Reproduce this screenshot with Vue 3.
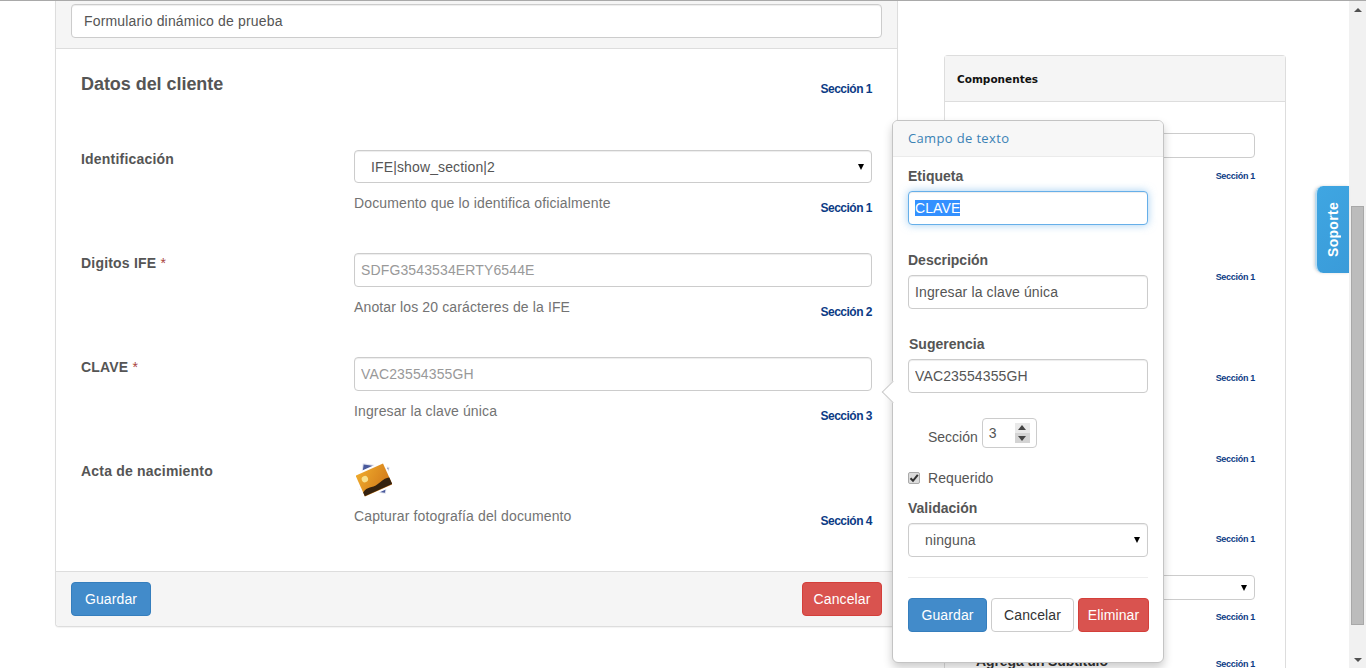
<template>
  <div class="screen">
    <div class="page">
      <div class="layout">
        <section class="panel form-panel">
          <div class="form-panel__heading">
            <input class="control" type="text" value="Formulario dinámico de prueba" readonly />
          </div>
          <div class="form-panel__body">
            <div class="title-row">
              <h3>Datos del cliente</h3>
              <span class="section-tag">Sección 1</span>
            </div>
            <div v-for="field in fields" :key="field.label" class="field" :class="'field--' + field.type">
              <label class="field__label">
                {{ field.label }}<span v-if="field.required" class="req"> *</span>
              </label>
              <div class="field__main">
                <select v-if="field.type === 'select'" class="control control--select">
                  <option>{{ field.value }}</option>
                </select>
                <input v-else-if="field.type === 'text'" class="control" type="text" :placeholder="field.value" readonly />
                <div v-else class="photo">
                  <svg width="36" height="36" viewBox="0 0 36 36" aria-hidden="true">
                    <defs>
                      <linearGradient id="sun" x1="0" y1="0" x2="1" y2="1">
                        <stop offset="0" stop-color="#eeaa2c" />
                        <stop offset="1" stop-color="#cf7418" />
                      </linearGradient>
                    </defs>
                    <rect x="5" y="4" width="27" height="27" fill="#dfe2ee" transform="rotate(8 18 16)" />
                    <rect x="6" y="5" width="25" height="25" fill="#4a5a9c" transform="rotate(8 18 16)" />
                    <g transform="rotate(-24 18 19)">
                      <rect x="1" y="5.5" width="34" height="27" fill="#fff" />
                      <rect x="3" y="7.5" width="30" height="23" fill="url(#sun)" />
                      <circle cx="10" cy="14.5" r="3.2" fill="#f8e08c" />
                      <path d="M3 26c6-4 10 0 16-1.500s10-3 14-1.500v7H3z" fill="#35220f" />
                    </g>
                  </svg>
                </div>
                <div class="field__foot">
                  <span class="help">{{ field.help }}</span>
                  <span class="section-tag">{{ field.section }}</span>
                </div>
              </div>
            </div>
          </div>
          <div class="form-panel__footer">
            <button class="btn btn--primary">Guardar</button>
            <button class="btn btn--danger">Cancelar</button>
          </div>
        </section>

        <aside class="panel parts-panel">
          <div class="parts-panel__heading">Componentes</div>
          <div class="parts-panel__body">
            <div v-for="(part, i) in parts" :key="i" class="part" :class="{ 'part--title': part.kind === 'title' }" :style="{ height: part.height + 'px' }">
              <input v-if="part.kind === 'input'" class="part__control" type="text" readonly />
              <select v-else-if="part.kind === 'select'" class="part__control part__control--select"></select>
              <strong v-else-if="part.kind === 'title'" class="part__title">Agrega un Subtitulo</strong>
              <span class="part__tag">Sección 1</span>
            </div>
          </div>
        </aside>
      </div>
    </div>

    <div class="scrollbar">
      <span class="scrollbar__arrow scrollbar__arrow--up"></span>
      <span class="scrollbar__thumb"></span>
      <span class="scrollbar__arrow scrollbar__arrow--down"></span>
    </div>

    <div class="support"><span>Soporte</span></div>

    <div class="popover">
      <span class="popover__arrow"></span>
      <div class="popover__title">Campo de texto</div>
      <div class="popover__body">
        <div class="group">
          <label>Etiqueta</label>
          <div class="control control--focus"><span class="selected">CLAVE</span></div>
        </div>
        <div class="group">
          <label>Descripción</label>
          <input class="control" type="text" value="Ingresar la clave única" readonly />
        </div>
        <div class="group">
          <label class="shift">Sugerencia</label>
          <input class="control" type="text" value="VAC23554355GH" readonly />
        </div>
        <div class="section-row">
          <span>Sección</span>
          <div class="spinner">
            <span class="spinner__value">3</span>
            <span class="spinner__btns">
              <i class="up"></i>
              <i class="down"></i>
            </span>
          </div>
        </div>
        <div class="check-row">
          <span class="check">
            <svg width="10" height="10" viewBox="0 0 10 10" aria-hidden="true">
              <path d="M1.5 5.200 4 7.800 8.800 1.800" fill="none" stroke="#333" stroke-width="2" />
            </svg>
          </span>
          <span>Requerido</span>
        </div>
        <div class="group group--last">
          <label>Validación</label>
          <select class="control control--select"><option>ninguna</option></select>
        </div>
        <hr />
        <div class="actions">
          <button class="btn btn--primary">Guardar</button>
          <button class="btn btn--default">Cancelar</button>
          <button class="btn btn--danger">Eliminar</button>
        </div>
      </div>
    </div>
  </div>
</template>

<script setup>
const fields = [
  { label: 'Identificación', type: 'select', value: 'IFE|show_section|2', help: 'Documento que lo identifica oficialmente', section: 'Sección 1' },
  { label: 'Digitos IFE', type: 'text', required: true, value: 'SDFG3543534ERTY6544E', help: 'Anotar los 20 carácteres de la IFE', section: 'Sección 2' },
  { label: 'CLAVE', type: 'text', required: true, value: 'VAC23554355GH', help: 'Ingresar la clave única', section: 'Sección 3' },
  { label: 'Acta de nacimiento', type: 'photo', help: 'Capturar fotografía del documento', section: 'Sección 4' }
]

const parts = [
  { kind: 'input', height: 80 },
  { height: 101 },
  { height: 101 },
  { height: 81 },
  { height: 80 },
  { kind: 'select', height: 78 },
  { kind: 'title', height: 47 }
]
</script>

<style>
html, body { margin: 0; overflow: hidden; background: #fff; }
</style>

<style scoped>
.screen { position: relative; display: flex; height: 667px; border-top: 1px solid #a9a9a9; overflow: hidden; font-family: "Liberation Sans", Arial, sans-serif; font-size: 14px; line-height: 20px; color: #555; }
.page { flex: 1; min-width: 0; }
.layout { display: flex; align-items: flex-start; padding-left: 55px; }

.panel { box-sizing: border-box; background: #fff; border: 1px solid #ddd; }

/* formulario */
.form-panel { width: 843px; border-top: 0; border-radius: 0 0 4px 4px; box-shadow: 0 1px 1px rgba(0,0,0,.05); }
.form-panel__heading { padding: 3px 15px 10px; background: #f5f5f5; border-bottom: 1px solid #ddd; }
.form-panel__body { padding: 0 25px; }
.form-panel__footer { display: flex; justify-content: space-between; padding: 10px 15px; background: #f5f5f5; border-top: 1px solid #ddd; border-radius: 0 0 4px 4px; }

.title-row { display: flex; justify-content: space-between; height: 100px; padding-top: 24px; box-sizing: border-box; }
.title-row h3 { margin: 0; font-size: 18px; line-height: 22px; font-weight: 700; color: #555; letter-spacing: -.05px; }
.title-row .section-tag { margin-top: 8px; }

.field { display: flex; height: 104px; }
.field--photo { height: 110px; }
.field__label { width: 273px; flex: none; font-weight: 700; letter-spacing: .2px; }
.req { color: #a94442; font-weight: 400; }
.field__main { flex: 1; min-width: 0; }
.field__foot { display: flex; justify-content: space-between; margin-top: 10px; }
.field--select .control--select { margin-top: 1px; height: 33px; }
.help { color: #737373; letter-spacing: .13px; }
.section-tag { align-self: flex-end; margin-bottom: -3px; font-size: 12px; line-height: 16px; font-weight: 700; color: #0c3b85; letter-spacing: -.5px; }
.title-row .section-tag { align-self: flex-start; margin-bottom: 0; }

.photo { height: 35px; padding-left: 2px; }
.photo svg { display: block; }

.control { display: block; box-sizing: border-box; width: 100%; height: 34px; padding: 6px; background: #fff; border: 1px solid #ccc; border-radius: 4px; box-shadow: inset 0 1px 1px rgba(0,0,0,.075); font: 14px/20px "Liberation Sans", Arial, sans-serif; letter-spacing: .13px; color: #555; outline: 0; }
.control::placeholder { color: #999; opacity: 1; }
.form-panel__heading .control { padding: 6px 12px; letter-spacing: .17px; }
.control--select,
.part__control--select { appearance: none; background-image: url("data:image/svg+xml,%3Csvg xmlns='http://www.w3.org/2000/svg' width='6' height='6'%3E%3Cpath d='M0 0h6L3 6z' fill='%23000'/%3E%3C/svg%3E"); background-repeat: no-repeat; background-position: right 7px center; }
.control--select { padding: 6px 16px; color: #555; }
.control--focus { border-color: #66afe9; box-shadow: inset 0 1px 1px rgba(0,0,0,.075), 0 0 8px rgba(102,175,233,.6); }
.selected { background: #3390ff; color: #fff; letter-spacing: .1px; }

/* componentes */
.parts-panel { width: 342px; margin: 54px 0 0 46px; border-radius: 4px 4px 0 0; border-bottom: 0; }
.parts-panel__heading { box-sizing: border-box; height: 46px; padding: 0 12px; background: #f5f5f5; border-bottom: 1px solid #ddd; font: 700 10.5px/47px "DejaVu Sans", sans-serif; color: #111; }
.parts-panel__body { padding: 0 30px 0 31px; }
.part { display: flex; flex-direction: column; justify-content: flex-end; align-items: flex-end; box-sizing: border-box; }
.part--title { flex-direction: row; justify-content: space-between; }
.part__control { box-sizing: border-box; width: 100%; height: 25px; margin-bottom: 12px; background-color: #fff; border: 1px solid #ccc; border-radius: 4px; outline: 0; }
.part__control--select { margin-bottom: 11px; }
.part__title { margin-bottom: -1px; font-size: 14px; color: #333; letter-spacing: -.1px; }
.part__tag { font-size: 9px; line-height: 12px; font-weight: 700; color: #0c3b85; letter-spacing: -.3px; }

/* barra de desplazamiento */
.scrollbar { position: relative; flex: none; width: 17px; background: #f1f1f1; }
.scrollbar__thumb { position: absolute; top: 205px; left: 2px; width: 13px; height: 419px; background: #bcbcbc; border: 1px solid #a8a8a8; box-sizing: border-box; }
.scrollbar__arrow { position: absolute; left: 5px; border-left: 4px solid transparent; border-right: 4px solid transparent; }
.scrollbar__arrow--up { top: 7px; border-bottom: 4px solid #505050; }
.scrollbar__arrow--down { bottom: 6px; border-top: 4px solid #505050; }

/* pestaña soporte */
.support { position: absolute; top: 185px; left: 1315px; display: flex; align-items: center; justify-content: center; box-sizing: border-box; width: 34px; height: 87px; background: linear-gradient(135deg, #3fa6e2, #3a9bd9); border-left: 2px solid #b9dcf2; border-radius: 8px 0 0 8px; box-shadow: -1px 0 3px rgba(0,0,0,.15); }
.support span { writing-mode: vertical-rl; transform: rotate(180deg); font-size: 14px; font-weight: 700; color: #fff; letter-spacing: .3px; }

/* popover */
.popover { position: absolute; top: 119px; left: 892px; box-sizing: border-box; width: 272px; background: #fff; border: 1px solid #c4c4c4; border-radius: 6px; box-shadow: 0 5px 10px rgba(0,0,0,.2); }
.popover__arrow { position: absolute; top: 263px; left: -8px; width: 15px; height: 15px; background: #fff; border-left: 1px solid #ccc; border-bottom: 1px solid #ccc; transform: rotate(45deg); }
.popover__title { position: relative; box-sizing: border-box; height: 36px; padding: 0 15px; background: #f7f7f7; border-bottom: 1px solid #ebebeb; border-radius: 5px 5px 0 0; font: 13px/35px "Open Sans", sans-serif; letter-spacing: .35px; color: #3b82b5; }
.popover__body { position: relative; padding: 9px 15px 30px; }
.group { margin-bottom: 25px; }
.group label { display: block; margin-bottom: 5px; font-weight: 700; }
.group label.shift { margin-left: 1px; }
.group--last { margin-bottom: 20px; }
.popover .control { padding: 6px; }
.popover .control--select { padding: 6px 16px; }
.section-row { display: flex; align-items: flex-start; gap: 4px; height: 30px; padding-left: 20px; }
.section-row > span { margin-top: 9px; }
.spinner { display: flex; justify-content: space-between; box-sizing: border-box; width: 55px; height: 30px; padding: 4px 6px; border: 1px solid #ccc; border-radius: 4px; }
.spinner__value { line-height: 20px; }
.spinner__btns { display: flex; flex-direction: column; width: 15px; height: 20px; background: #d4d4d4; }
.spinner__btns i { position: relative; flex: 1; display: block; }
.spinner__btns .up { background: #e9e9e9; }
.spinner__btns i::after { content: ""; position: absolute; left: 3px; border-left: 4px solid transparent; border-right: 4px solid transparent; }
.spinner__btns .up::after { top: 2px; border-bottom: 5px solid #444; }
.spinner__btns .down::after { top: 3px; border-top: 5px solid #444; }
.check-row { display: flex; align-items: center; gap: 8px; margin: 20px 0 10px; letter-spacing: .1px; }
.check { display: flex; align-items: center; justify-content: center; box-sizing: border-box; width: 12px; height: 12px; background: #dcdcdc; border: 1px solid #aaa; border-radius: 2px; }
.popover hr { margin: 0 0 20px; border: 0; border-top: 1px solid #eee; }
.actions { display: flex; gap: 4px; margin-right: -1px; }
.popover .btn--primary { width: 79px; }
.popover .btn--default { width: 83px; }
.popover .btn--danger { width: 71px; }

/* botones */
.btn { box-sizing: border-box; width: 80px; height: 34px; padding: 0; border: 1px solid transparent; border-radius: 4px; font: 14px/20px "Liberation Sans", Arial, sans-serif; letter-spacing: .1px; cursor: pointer; }
.btn--primary { background: #428bca; border-color: #357ebd; color: #fff; }
.btn--danger { background: #d9534f; border-color: #d43f3a; color: #fff; }
.btn--default { background: #fff; border-color: #ccc; color: #333; }
</style>
